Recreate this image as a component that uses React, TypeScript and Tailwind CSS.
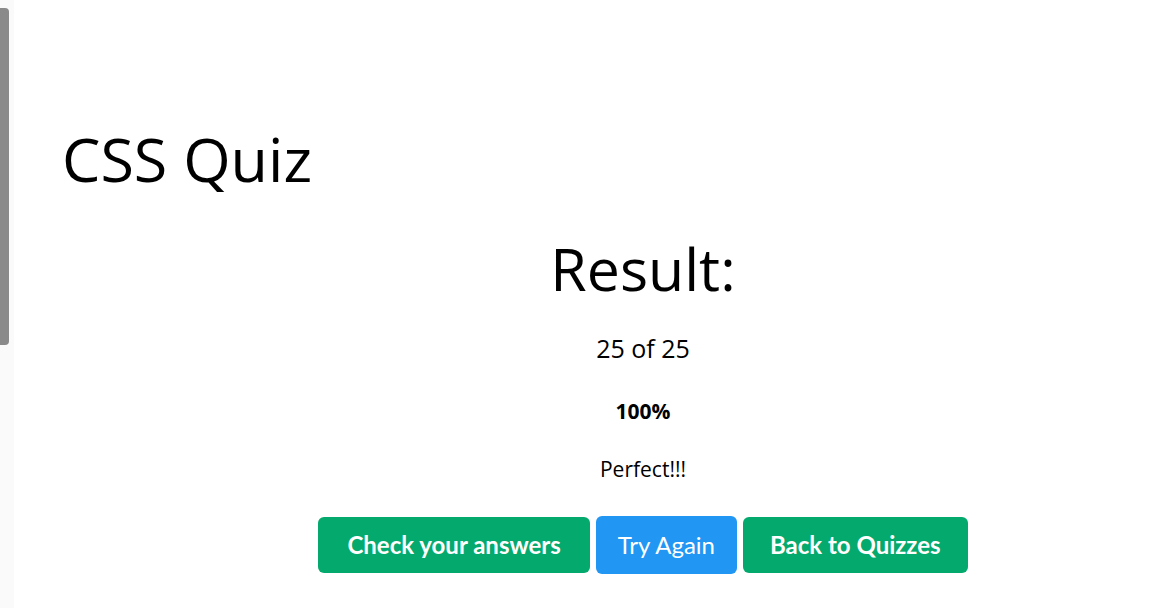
const buttons = [
  { label: "Check your answers", style: "bg-[#04aa6d] h-[56px] px-[29px] font-bold" },
  { label: "Try Again", style: "bg-[#2196f3] h-[58px] px-[22px] font-normal" },
  { label: "Back to Quizzes", style: "bg-[#04aa6d] h-[56px] px-[27px] font-bold" },
];

export default function App() {
  return (
    <div className="flex h-[608px] w-full overflow-hidden bg-white text-black [font-family:'Open_Sans',sans-serif]">
      {/* page scrollbar */}
      <div className="w-[14px] shrink-0 bg-[#fafafa] pt-[8px]">
        <div className="h-[337px] w-[9px] rounded-r-[4px] bg-[#8a8a8a]" />
      </div>

      <div className="flex flex-1 flex-col">
        <h1 className="ml-[48px] mt-[128px] text-[61px] leading-none font-normal">CSS Quiz</h1>

        <div className="flex flex-col items-center pl-[106px]">
          <h2 className="mt-[50px] text-[59px] leading-none font-normal">Result:</h2>
          <p className="mt-[38px] text-[25px] leading-none">25 of 25</p>
          <p className="mt-[40px] text-[21px] leading-none font-bold">100%</p>
          <p className="mt-[37px] text-[21px] leading-none">Perfect!!!</p>

          <div className="mt-[36px] flex items-center gap-[6px]">
            {buttons.map((b) => (
              <button
                key={b.label}
                className={`${b.style} rounded-[6px] text-[24px] text-white [font-family:Lato,sans-serif]`}
              >
                {b.label}
              </button>
            ))}
          </div>
        </div>
      </div>
    </div>
  );
}
